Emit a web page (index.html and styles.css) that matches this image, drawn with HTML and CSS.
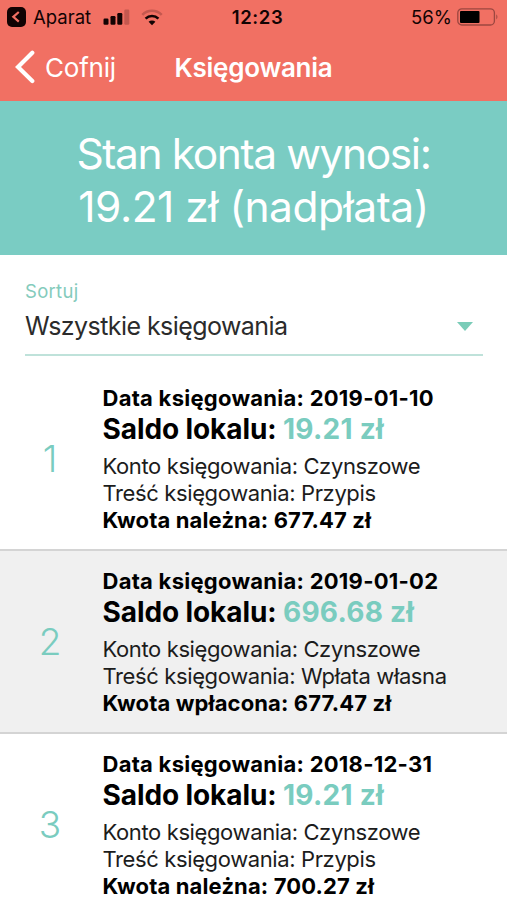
FILE: index.html
```html
<!DOCTYPE html>
<html lang="pl">
<head>
    <meta charset="UTF-8">
    <meta name="viewport" content="width=device-width, initial-scale=1.0">
    <title>Księgowania</title>
    <link rel="stylesheet" href="styles.css">
</head>
<body>
    <header class="header">
        <!-- Status bar -->
        <div class="status-bar">
            <div class="status-left">
                <svg class="back-app" width="19" height="20" viewBox="0 0 19 20">
                    <rect width="19" height="20" rx="5" fill="#120303"/>
                    <path d="M11.8 5 L6.3 9.8 L11.8 14.6" fill="none" stroke="#f37063" stroke-width="2.2"/>
                </svg>
                <span class="status-app">Aparat</span>
                <svg class="signal" width="27" height="16" viewBox="0 0 27 16">
                    <rect x="0.5" y="9.5" width="5" height="6.3" rx="1.2" fill="#120303"/>
                    <rect x="7.5" y="7" width="5" height="8.8" rx="1.2" fill="#120303"/>
                    <rect x="14.3" y="4" width="5" height="11.8" rx="1.2" fill="#120303"/>
                    <rect x="21.3" y="0.5" width="5" height="15.3" rx="1.2" fill="#c4584f"/>
                </svg>
                <svg class="wifi" width="22" height="17" viewBox="0 0 22 17">
                    <path d="M1.3 5.8 A13.8 13.8 0 0 1 20.7 5.8" fill="none" stroke="#c4584f" stroke-width="2.6"/>
                    <path d="M4.6 9.7 A9 9 0 0 1 17.4 9.7" fill="none" stroke="#120303" stroke-width="2.6"/>
                    <path d="M11 16.2 L7.6 12.8 A4.8 4.8 0 0 1 14.4 12.8 Z" fill="#120303"/>
                </svg>
            </div>
            <span class="status-time">12:23</span>
            <div class="status-right">
                <span class="status-battery">56%</span>
                <svg width="42" height="18" viewBox="0 0 42 18">
                    <rect x="0.8" y="0.8" width="36.6" height="16.2" rx="4" fill="none" stroke="#9c4740" stroke-width="1.3"/>
                    <rect x="3" y="3" width="19.5" height="12" rx="1" fill="#000"/>
                    <path d="M39.3 6.2 Q41.6 8.9 39.3 11.6 Z" fill="#9c4740"/>
                </svg>
            </div>
        </div>

        <!-- Navigation -->
        <div class="nav-bar">
            <a class="nav-back">
                <svg width="20" height="34" viewBox="0 0 20 34">
                    <path d="M17.3 2.8 L3 17 L17.3 31" fill="none" stroke="#fff" stroke-width="4.2" stroke-linecap="round"/>
                </svg>
                <span>Cofnij</span>
            </a>
            <h1 class="nav-title">Księgowania</h1>
        </div>
    </header>

    <!-- Account balance -->
    <section class="balance">
        <div class="balance-label">Stan konta wynosi:</div>
        <div class="balance-value">19.21 zł (nadpłata)</div>
    </section>

    <!-- Sorting -->
    <div class="sort">
        <div class="sort-label">Sortuj</div>
        <div class="sort-select">
            <span class="sort-text">Wszystkie księgowania</span>
            <span class="sort-arrow"></span>
        </div>
    </div>

    <!-- Bookings -->
    <div class="list">
        <div class="item">
            <div class="item-number">1</div>
            <div class="item-body">
                <div class="date">Data księgowania: 2019-01-10</div>
                <div class="saldo">Saldo lokalu: <span class="amount">19.21 zł</span></div>
                <div class="line">Konto księgowania: Czynszowe</div>
                <div class="line">Treść księgowania: Przypis</div>
                <div class="total">Kwota należna: 677.47 zł</div>
            </div>
        </div>
        <div class="item item-grey">
            <div class="item-number">2</div>
            <div class="item-body">
                <div class="date">Data księgowania: 2019-01-02</div>
                <div class="saldo">Saldo lokalu: <span class="amount">696.68 zł</span></div>
                <div class="line">Konto księgowania: Czynszowe</div>
                <div class="line">Treść księgowania: Wpłata własna</div>
                <div class="total">Kwota wpłacona: 677.47 zł</div>
            </div>
        </div>
        <div class="item">
            <div class="item-number">3</div>
            <div class="item-body">
                <div class="date">Data księgowania: 2018-12-31</div>
                <div class="saldo">Saldo lokalu: <span class="amount">19.21 zł</span></div>
                <div class="line">Konto księgowania: Czynszowe</div>
                <div class="line">Treść księgowania: Przypis</div>
                <div class="total">Kwota należna: 700.27 zł</div>
            </div>
        </div>
    </div>
</body>
</html>
```
FILE: styles.css
```css
* {
    box-sizing: border-box;
}

body {
    margin: 0;
    height: 900px;
    overflow: hidden;
    background-color: #fff;
    color: #000;
    font-family: Inter, "Liberation Sans", sans-serif;
}

.header {
    height: 101px;
    background-color: #f17063;
}

/* Status bar */
.status-bar {
    display: grid;
    grid-template-columns: 1fr auto 1fr;
    align-items: center;
    height: 34px;
    padding: 0 8px 0 7px;
    color: #120303;
    font-size: 18.5px;
}

.status-left,
.status-right {
    display: flex;
    align-items: center;
}

.status-right {
    justify-content: flex-end;
    gap: 5px;
}

.status-app {
    margin-left: 7px;
}

.signal {
    margin-left: 12px;
}

.wifi {
    margin-left: 11px;
}

.status-time {
    padding-left: 9px;
    font-weight: 600;
    letter-spacing: 0.6px;
}

/* Navigation */
.nav-bar {
    display: grid;
    grid-template-columns: 1fr auto 1fr;
    align-items: center;
    height: 66px;
    padding: 0 15px;
    color: #fff;
}

.nav-back {
    display: flex;
    align-items: center;
    gap: 10px;
    font-size: 26px;
    letter-spacing: -0.2px;
}

.nav-title {
    margin: 0;
    font-size: 26px;
    font-weight: 600;
    letter-spacing: -0.25px;
}

/* Account balance */
.balance {
    height: 154px;
    padding-top: 26px;
    background-color: #7accc3;
    color: #fff;
    font-size: 42.5px;
    line-height: 53px;
    text-align: center;
}

.balance-label {
    letter-spacing: -1.4px;
}

.balance-value {
    letter-spacing: -0.5px;
}

/* Sorting */
.sort {
    height: 101px;
    margin: 0 24px 0 25px;
    padding-top: 25px;
    border-bottom: 2px solid #bfe2da;
}

.sort-label {
    color: #84cbbc;
    font-size: 18.5px;
    letter-spacing: 0.3px;
    line-height: 22px;
}

.sort-select {
    display: flex;
    align-items: center;
    justify-content: space-between;
    height: 48px;
    padding-right: 10px;
    color: #2b2b2b;
    font-size: 25px;
    letter-spacing: -0.57px;
}

.sort-arrow {
    border: 8.5px solid transparent;
    border-top: 9px solid #7accb8;
    border-bottom: 0;
}

/* Bookings */
.list {
    margin-top: 12px;
}

.item {
    display: flex;
    align-items: center;
    height: 183px;
    border-bottom: 2px solid #d4d4d4;
}

.item-grey {
    background-color: #f0f0f0;
}

.item-number {
    width: 100px;
    margin-right: 2.5px;
    color: #7accbf;
    font-size: 37px;
    font-weight: 300;
    text-align: center;
}

.item-body {
    padding-top: 1px;
    font-size: 22px;
    line-height: 27px;
    white-space: nowrap;
}

.date,
.total {
    font-weight: 700;
}

.date {
    letter-spacing: 0.26px;
    line-height: 28px;
}

.total {
    letter-spacing: 0.13px;
}

.saldo {
    margin-bottom: 7px;
    font-size: 28px;
    font-weight: 700;
    letter-spacing: -0.1px;
    line-height: 34px;
}

.amount {
    color: #7accbf;
    letter-spacing: 0.25px;
}

.line {
    color: #1c1c1c;
    letter-spacing: -0.38px;
}
```
